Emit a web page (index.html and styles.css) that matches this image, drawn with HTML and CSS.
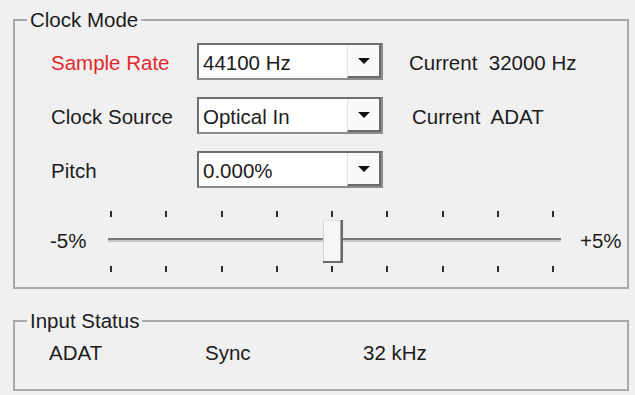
FILE: index.html
```html
<!DOCTYPE html>
<html lang="en">

<head>
    <meta charset="utf-8">
    <title>Clock Mode</title>
    <link rel="stylesheet" href="styles.css">
</head>

<body>
    <fieldset class="gruppe clock">
        <legend>Clock Mode</legend>
        <div class="rows">
            <div class="label rod">Sample Rate</div>
            <div class="combo"><span>44100 Hz</span><b class="knap"></b></div>
            <div class="current">Current&nbsp; 32000 Hz</div>

            <div class="label">Clock Source</div>
            <div class="combo"><span>Optical In</span><b class="knap"></b></div>
            <div class="current to">Current&nbsp; ADAT</div>

            <div class="label">Pitch</div>
            <div class="combo"><span>0.000%</span><b class="knap"></b></div>
            <div></div>
        </div>

        <div class="slider">
            <span class="ende">-5%</span>
            <svg class="track" width="461" height="70" viewBox="0 0 461 70">
                <rect x="4" y="32" width="453" height="2" fill="#777" />
                <rect x="4" y="34" width="453" height="2" fill="#c4c4c4" />
                <g fill="#2e2e2e" id="ticks">
                    <rect x="6" y="5" width="2" height="6" />
                    <rect x="61" y="5" width="2" height="6" />
                    <rect x="117" y="5" width="2" height="6" />
                    <rect x="172" y="5" width="2" height="6" />
                    <rect x="227" y="5" width="2" height="6" />
                    <rect x="282" y="5" width="2" height="6" />
                    <rect x="338" y="5" width="2" height="6" />
                    <rect x="393" y="5" width="2" height="6" />
                    <rect x="448" y="5" width="2" height="6" />
                    <rect x="6" y="60" width="2" height="6" />
                    <rect x="61" y="60" width="2" height="6" />
                    <rect x="117" y="60" width="2" height="6" />
                    <rect x="172" y="60" width="2" height="6" />
                    <rect x="227" y="60" width="2" height="6" />
                    <rect x="282" y="60" width="2" height="6" />
                    <rect x="338" y="60" width="2" height="6" />
                    <rect x="393" y="60" width="2" height="6" />
                    <rect x="448" y="60" width="2" height="6" />
                </g>
                <!-- thumb -->
                <rect x="219" y="14" width="20" height="43" fill="#f6f6f6" />
                <rect x="219" y="14" width="1" height="43" fill="#d4d4d4" />
                <rect x="219" y="14" width="20" height="1" fill="#e2e2e2" />
                <rect x="236" y="14" width="1" height="41" fill="#a8a8a8" />
                <rect x="237" y="14" width="2" height="43" fill="#696969" />
                <rect x="219" y="55" width="20" height="2" fill="#696969" />
            </svg>
            <span class="ende plus">+5%</span>
        </div>
    </fieldset>

    <fieldset class="gruppe status">
        <legend>Input Status</legend>
        <div class="statuslinje">
            <span class="kol">ADAT</span>
            <span class="kol">Sync</span>
            <span>32 kHz</span>
        </div>
    </fieldset>
</body>

</html>
```

FILE: styles.css
```css
body {
    margin: 0;
    background-color: #f0f0f0;
    font-family: "Liberation Sans", Arial, sans-serif;
    font-size: 20.5px;
    color: #1c1c1c;
}

.gruppe {
    box-sizing: border-box;
    width: 616px;
    margin: 8px 0 0 13px;
    padding: 11px 0 11px 12px;
    border: 2px solid #a9a9a9;
    min-width: 0;
}

.gruppe legend {
    padding: 0 3px;
    line-height: 24px;
}

.status {
    margin-top: 20px;
    padding-top: 8px;
    padding-bottom: 24px;
}

.rows {
    display: grid;
    grid-template-columns: 146px 186px auto;
    grid-auto-rows: 37px;
    row-gap: 17px;
    align-items: center;
    padding-left: 24px;
}

.label,
.current {
    padding-top: 2px;
}

.rod {
    color: #e3282c;
}

.current {
    margin-left: 26px;
}

.current.to {
    margin-left: 29px;
}

.combo {
    box-sizing: border-box;
    height: 37px;
    display: flex;
    align-items: stretch;
    background: #fff;
    border: 2px solid #8c8c8c;
    border-top-color: #6f6f6f;
    border-left-color: #6f6f6f;
}

.combo span {
    flex: 1;
    padding-left: 4px;
    line-height: 35px;
}

.knap {
    box-sizing: border-box;
    width: 34px;
    display: flex;
    align-items: center;
    justify-content: center;
    background: #fafafa;
    border-left: 1px solid #e4e4e4;
    border-right: 2px solid #6a6a6a;
    border-bottom: 2px solid #6a6a6a;
}

.knap::after {
    content: "";
    border-left: 6px solid transparent;
    border-right: 6px solid transparent;
    border-top: 6px solid #111;
}

.slider {
    display: flex;
    align-items: center;
    margin-top: 18px;
    height: 70px;
}

.ende {
    width: 54px;
    margin-left: 23px;
}

.ende.plus {
    width: auto;
    margin-left: 15px;
}

.track {
    display: block;
}

.statuslinje {
    display: flex;
    padding-left: 22px;
    line-height: 24px;
}

.kol {
    width: 156px;
}

.kol + .kol {
    width: 158px;
}
```
